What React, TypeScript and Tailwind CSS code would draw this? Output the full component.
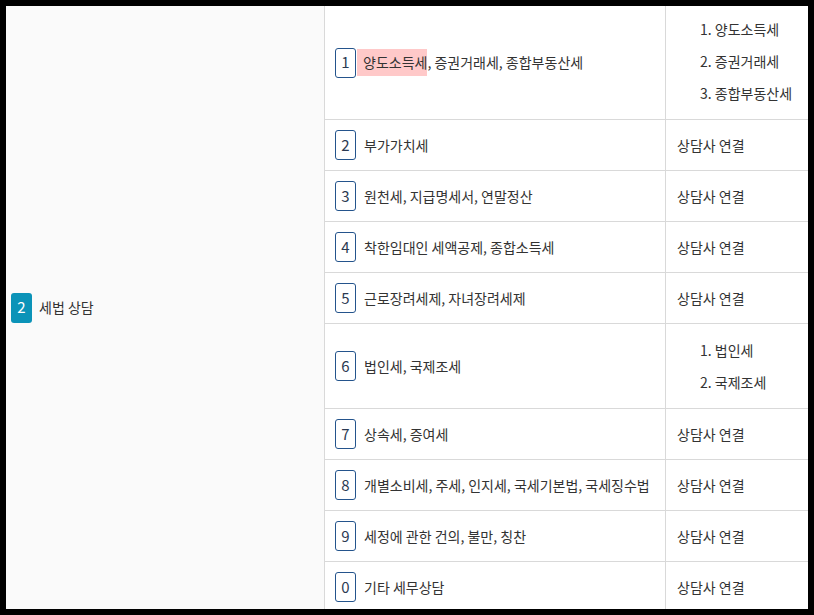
import React from 'react';

type Row = {
  no: string;
  label: React.ReactNode;
  answer: string[] | null;
  height: string;
};

const rows: Row[] = [
  {
    no: '1',
    label: (
      <>
        <span className="inline-block h-[27px] leading-[27px] ml-px pl-[6px] bg-[#ffc9c9]">양도소득세</span>
        , 증권거래세, 종합부동산세
      </>
    ),
    answer: ['1. 양도소득세', '2. 증권거래세', '3. 종합부동산세'],
    height: 'h-[114px]',
  },
  { no: '2', label: '부가가치세', answer: null, height: 'h-[51px]' },
  { no: '3', label: '원천세, 지급명세서, 연말정산', answer: null, height: 'h-[51px]' },
  { no: '4', label: '착한임대인 세액공제, 종합소득세', answer: null, height: 'h-[51px]' },
  { no: '5', label: '근로장려세제, 자녀장려세제', answer: null, height: 'h-[51px]' },
  { no: '6', label: '법인세, 국제조세', answer: ['1. 법인세', '2. 국제조세'], height: 'h-[85px]' },
  { no: '7', label: '상속세, 증여세', answer: null, height: 'h-[51px]' },
  { no: '8', label: '개별소비세, 주세, 인지세, 국세기본법, 국세징수법', answer: null, height: 'h-[51px]' },
  { no: '9', label: '세정에 관한 건의, 불만, 칭찬', answer: null, height: 'h-[51px]' },
  { no: '0', label: '기타 세무상담', answer: null, height: 'h-[51px]' },
];

export default function App() {
  return (
    <div
      className="w-[814px] h-[615px] bg-black p-[6px] text-[14px] text-[#333]"
      style={{ fontFamily: '"Noto Sans CJK KR", "Noto Sans", sans-serif' }}
    >
      <div className="flex h-[603px] overflow-hidden bg-white">
        <div className="w-[319px] shrink-0 flex items-center gap-[7px] pl-[5px] bg-[#fafafa] border-r border-[#d9d9d9]">
          <span className="flex items-center justify-center w-[21px] h-[30px] rounded-[3px] bg-[#0b93b8] text-white text-[15px]">
            2
          </span>
          <span>세법 상담</span>
        </div>

        <div className="flex-1 flex flex-col">
          {rows.map((row) => (
            <div key={row.no} className={`flex shrink-0 border-b border-[#d9d9d9] ${row.height}`}>
              <div className="w-[341px] shrink-0 flex items-center pl-[10px] border-r border-[#d9d9d9]">
                <span className="flex items-center justify-center w-[21px] h-[30px] rounded-[3px] border border-[#24548c] text-[#2b3a52] text-[15px] shrink-0">
                  {row.no}
                </span>
                <span className={row.no === '1' ? 'whitespace-nowrap' : 'ml-[8px] whitespace-nowrap'}>{row.label}</span>
              </div>
              <div className="flex-1 flex items-center">
                {row.answer ? (
                  <div className={`pl-[34px] leading-[32px] whitespace-nowrap ${row.no === '1' ? 'pb-[3px]' : ''}`}>
                    {row.answer.map((a) => (
                      <div key={a}>{a}</div>
                    ))}
                  </div>
                ) : (
                  <span className="pl-[11px]">상담사 연결</span>
                )}
              </div>
            </div>
          ))}
        </div>
      </div>
    </div>
  );
}
